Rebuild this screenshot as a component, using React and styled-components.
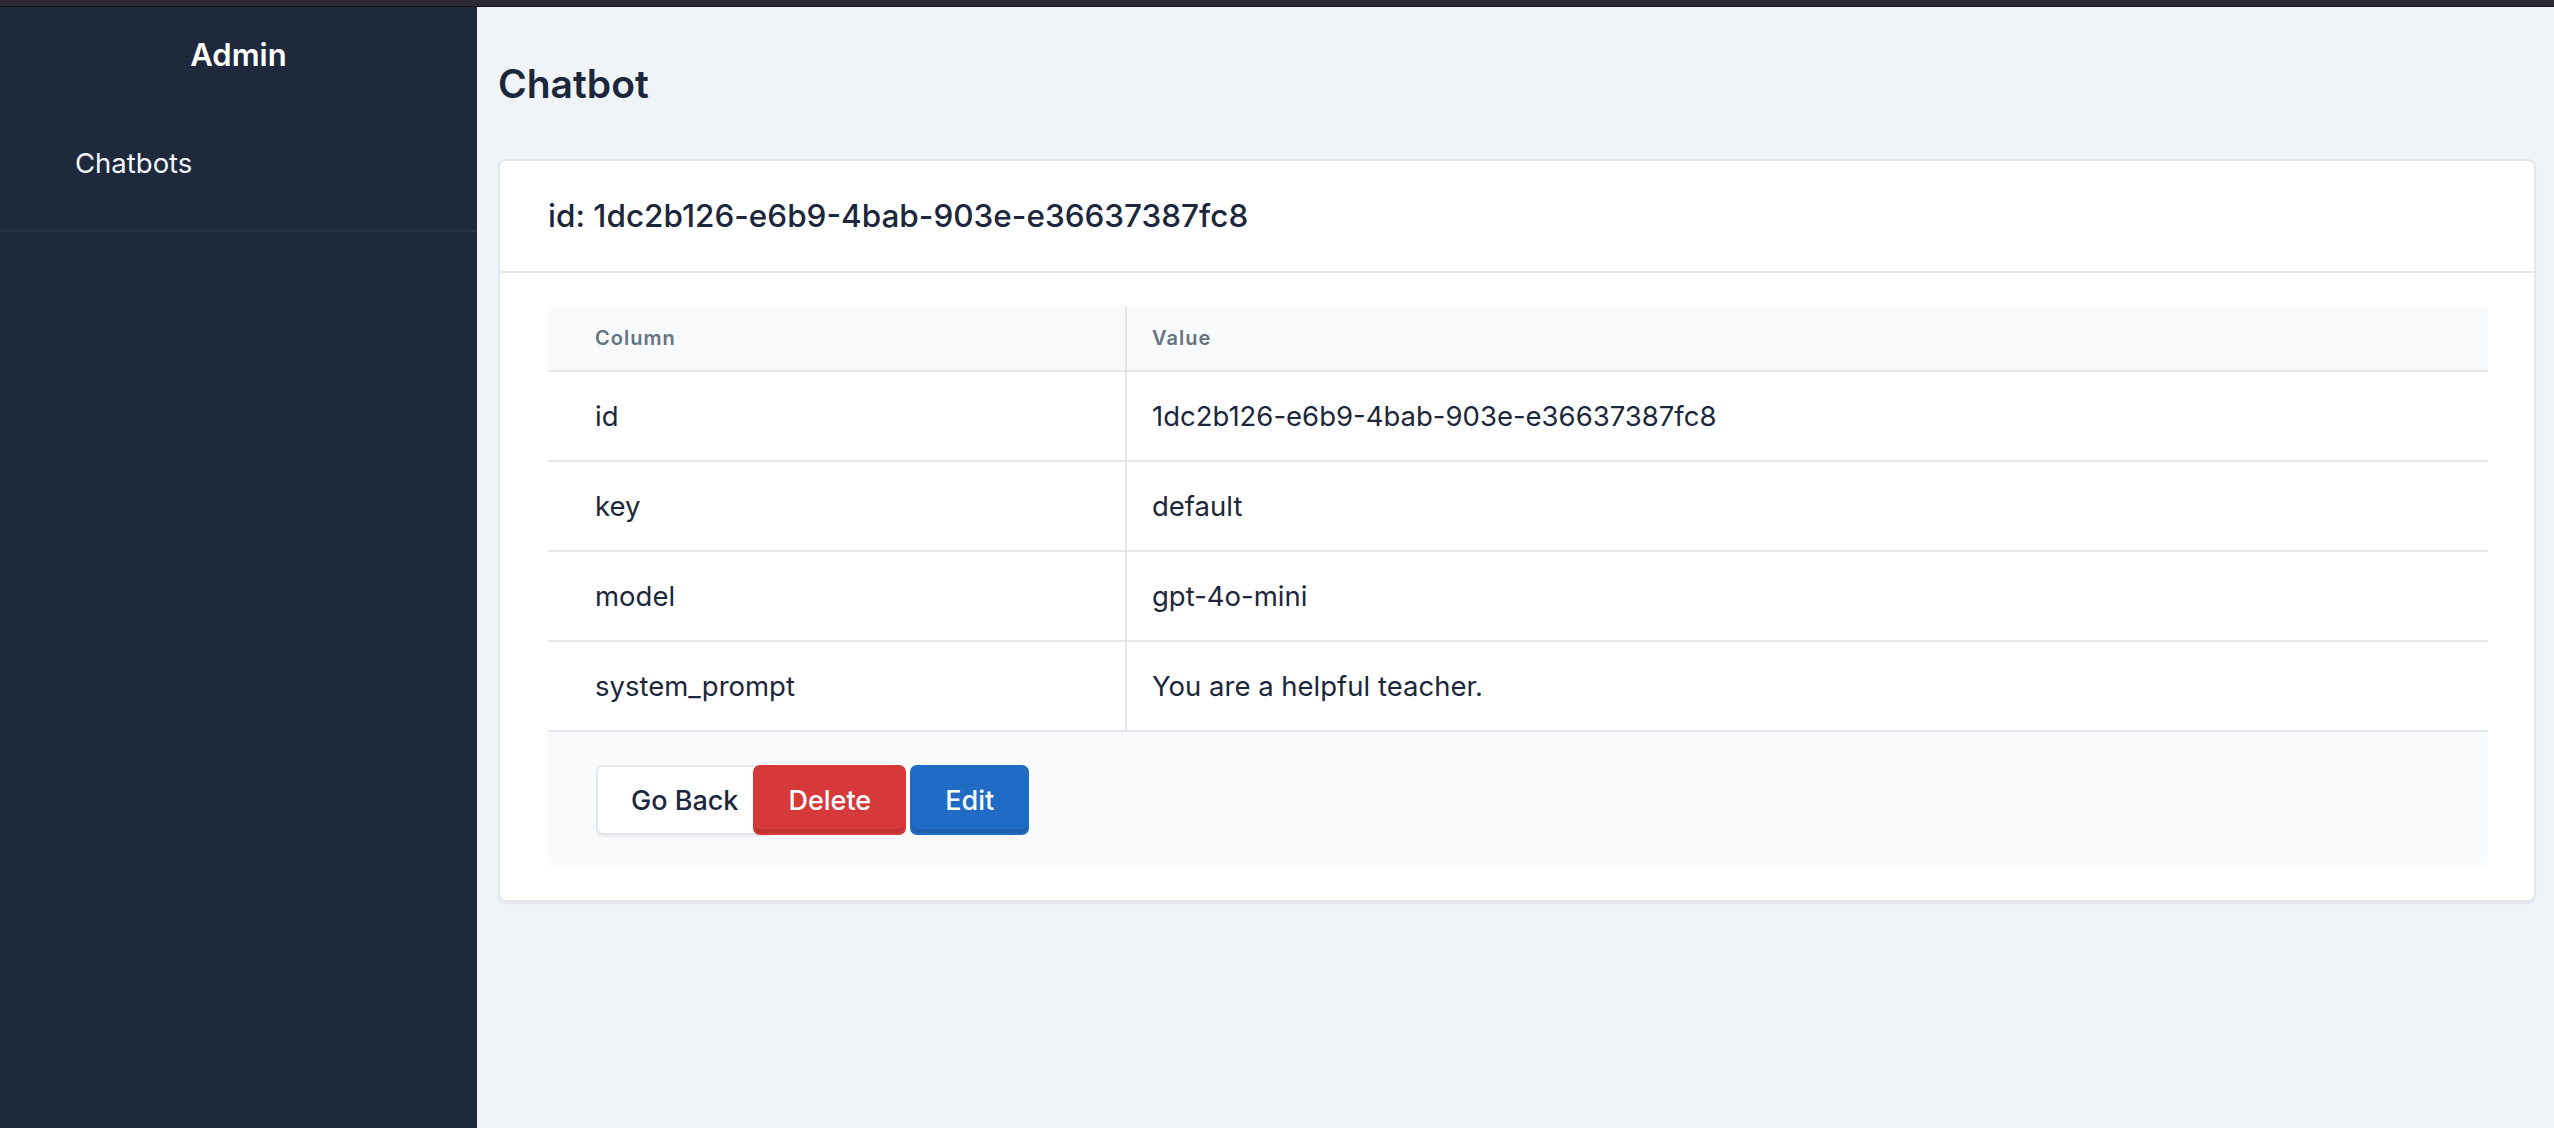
import styled, { createGlobalStyle } from "styled-components";

const GlobalStyle = createGlobalStyle`
    * {
        box-sizing: border-box;
    }
    body {
        margin: 0;
        font-family: Inter, "Noto Sans", "Liberation Sans", sans-serif;
        color: #1d273b;
        background: #f0f4f8;
    }
`

const rows = [
    { column: "id", value: "1dc2b126-e6b9-4bab-903e-e36637387fc8" },
    { column: "key", value: "default" },
    { column: "model", value: "gpt-4o-mini" },
    { column: "system_prompt", value: "You are a helpful teacher." },
];

const App = () => {

    return (
        <>
            <GlobalStyle />
            <TopBar />
            <Shell>
                <Sidebar>
                    <Brand>Admin</Brand>
                    <Nav>
                        <NavItem>Chatbots</NavItem>
                    </Nav>
                </Sidebar>
                <Main>
                    <Title>Chatbot</Title>
                    <Card>
                        <CardHeader>
                            <CardTitle>id: 1dc2b126-e6b9-4bab-903e-e36637387fc8</CardTitle>
                        </CardHeader>
                        <CardBody>
                            <Table>
                                <thead>
                                    <tr>
                                        <Th>Column</Th>
                                        <Th>Value</Th>
                                    </tr>
                                </thead>
                                <tbody>
                                    {rows.map((row) => (
                                        <tr key={row.column}>
                                            <Td>{row.column}</Td>
                                            <Td>{row.value}</Td>
                                        </tr>
                                    ))}
                                </tbody>
                            </Table>
                            <Footer>
                                <Button $variant="light">Go Back</Button>
                                <Button $variant="danger">Delete</Button>
                                <Button $variant="primary">Edit</Button>
                            </Footer>
                        </CardBody>
                    </Card>
                </Main>
            </Shell>
        </>
    )
};

const TopBar = styled.div`
    height: 7px;
    background-color: #2b2a33;
    border-bottom: 1px solid #17161c;
`
const Shell = styled.div`
    display: flex;
    min-height: calc(100vh - 7px);
`
const Sidebar = styled.aside`
    width: 477px;
    flex-shrink: 0;
    background-color: #1e293b;
    display: flex;
    flex-direction: column;
`
const Brand = styled.div`
    padding: 24px 0;
    text-align: center;
    color: #ffffff;
    font-size: 31px;
    line-height: 48px;
    font-weight: 600;
`
const Nav = styled.nav`
    border-bottom: 2px solid #283447;
`
const NavItem = styled.div`
    padding: 41px 75px 47px;
    color: #f1f5f9;
    font-size: 27.5px;
    line-height: 39px;
`
const Main = styled.main`
    flex: 1;
    padding: 0 18px 40px 21px;
`
const Title = styled.h1`
    margin: 53px 0 52px;
    font-size: 39px;
    line-height: 47px;
    font-weight: 600;
    color: #1d273b;
`
const Card = styled.div`
    background-color: #ffffff;
    border: 2px solid #e3e7ec;
    border-radius: 8px;
    box-shadow: 0 2px 2px rgba(30, 41, 59, 0.06);
`
const CardHeader = styled.div`
    padding: 31px 48px 31px;
    border-bottom: 2px solid #e3e7ec;
`
const CardTitle = styled.h2`
    margin: 0;
    font-size: 31.5px;
    line-height: 48px;
    font-weight: 500;
    color: #1d273b;
`
const CardBody = styled.div`
    padding: 33px 46px 33px 48px;
`
const Table = styled.table`
    width: 100%;
    border-collapse: collapse;

    tr > *:first-child {
        width: 578px;
        padding-left: 47px;
        border-right: 2px solid #e3e7ec;
    }
`
const Th = styled.th`
    background-color: #f8fafc;
    padding: 20px 24px 20px 25px;
    border-bottom: 2px solid #e3e7ec;
    text-align: left;
    font-size: 20px;
    line-height: 24px;
    font-weight: 600;
    letter-spacing: 0.05em;
    color: #667382;
`
const Td = styled.td`
    padding: 25px 24px 24px 25px;
    border-bottom: 2px solid #e3e7ec;
    font-size: 27.5px;
    line-height: 39px;
    color: #1d273b;
`
const Footer = styled.div`
    display: flex;
    align-items: center;
    padding: 33px 48px 32px;
    background-color: #f8fafc;
    border-radius: 0 0 8px 8px;
`
const variants = {
    light: `
        background-color: #ffffff;
        color: #1d273b;
        border-color: #e3e7ec;
        box-shadow: 0 2px 0 rgba(30, 41, 59, 0.06);
        margin-right: -20px;
    `,
    danger: `
        background-color: #d63939;
        color: #ffffff;
        border-color: #d63939;
        box-shadow: inset 0 -4px 0 rgba(0, 0, 0, 0.1);
        position: relative;
        margin-right: 4px;
    `,
    primary: `
        background-color: #206bc4;
        color: #ffffff;
        border-color: #206bc4;
        box-shadow: inset 0 -4px 0 rgba(0, 0, 0, 0.1);
    `,
}
const Button = styled.button`
    height: 70px;
    padding: 0 33px;
    display: inline-flex;
    align-items: center;
    border: 2px solid transparent;
    border-radius: 7px;
    font-family: inherit;
    font-size: 27px;
    font-weight: 500;
    cursor: pointer;
    ${(props) => variants[props.$variant]}
`

export default App;
